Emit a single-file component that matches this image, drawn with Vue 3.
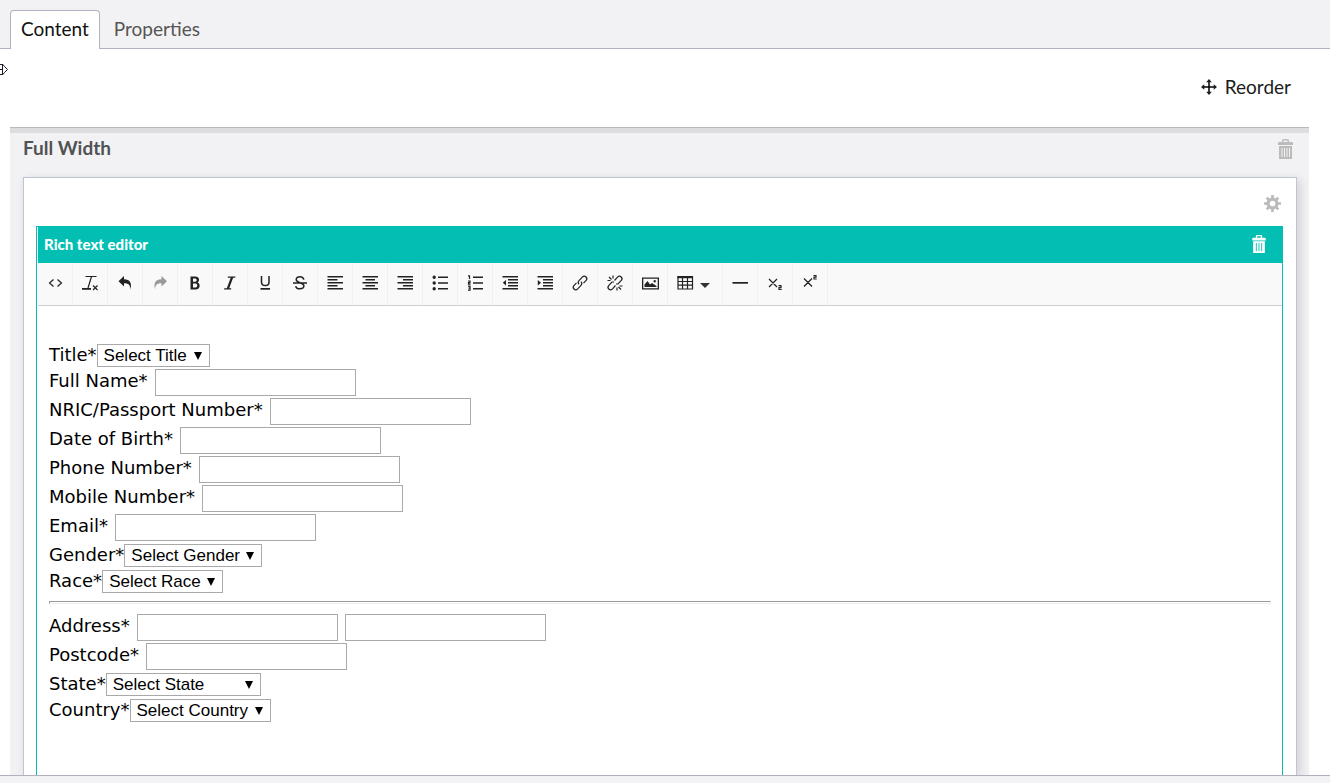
<script setup>
import { ref } from "vue";

const activeTab = ref("Content");
const tabs = ["Content", "Properties"];

// toolbar buttons, drawn on a 16x16 grid
const tools = [
  { title: "Source code", fill: "", line: "M6.500 4.500 2.500 8l4 3.500M10.500 4.500l4 3.500-4 3.500", thin: true },
  { title: "Clear formatting", fill: "M0 13h9v1.800H0z", line: "M3.500 1.500h11M9.500 1.500 6 13M11 10.500l4.500 4.500M15.500 10.500l-4.500 4.500", thin: true },
  { title: "Undo", fill: "M7 1v3.200c5.500-.2 8.500 3.800 6.300 10.300.2-4.300-1.700-6.300-6.300-6.200V11.500L1.500 6.200z", line: "" },
  { title: "Redo", fill: "M9.500 1v3.200c-5.500-.2-8.500 3.800-6.300 10.300-.2-4.300 1.700-6.300 6.300-6.200V11.500L15 6.200z", line: "", disabled: true },
  { title: "Bold", fill: "M3.500 1.500h5c3.800 0 4.600 4.300 2.200 6C14 9.200 13 14.500 8.700 14.500H3.500zM6 3.500v3.200h2.300c1.800 0 1.800-3.200 0-3.200zm0 5v4h2.600c2.200 0 2.200-4 0-4z", line: "" },
  { title: "Italic", fill: "M6 1.500h7.500l-.3 1.200h-2.100L7.200 13.300h2.100l-.3 1.200H2l.3-1.200h2.500L8.700 2.700H5.700z", line: "" },
  { title: "Underline", fill: "M3.500 13h9.500v1.700H3.500z", line: "M4.500 1v6c0 4.800 7.500 4.800 7.500 0V1" },
  { title: "Strikethrough", fill: "", line: "M1 8h14M11.800 4.600C11.300.9 4.200.8 4.200 4.600c0 3.700 7.700 2.500 7.700 6.200 0 4-7.700 4-8.100.3" },
  { title: "Align left", fill: "M.5 1h15.500v1.600H.5zM.5 4h10v1.600H.5zM.5 7h15.500v1.600H.5zM.5 10h10v1.600H.5zM.5 13h15.500v1.600H.5z", line: "" },
  { title: "Align center", fill: "M.5 1h15.500v1.600H.5zM3.500 4h9.500v1.600H3.500zM.5 7h15.500v1.600H.5zM3.500 10h9.500v1.600H3.500zM.5 13h15.500v1.600H.5z", line: "" },
  { title: "Align right", fill: "M.5 1h15.500v1.600H.5zM6 4h10v1.600H6zM.5 7h15.500v1.600H.5zM6 10h10v1.600H6zM.5 13h15.500v1.600H.5z", line: "" },
  { title: "Bullet list", fill: "M6 1.500h10v1.600H6zM6 7.200h10v1.600H6zM6 13h10v1.600H6zM.5 2.200a1.700 1.700 0 1 0 3.400 0 1.700 1.700 0 1 0-3.400 0zM.5 8a1.700 1.700 0 1 0 3.400 0 1.700 1.700 0 1 0-3.400 0zM.5 13.700a1.700 1.700 0 1 0 3.400 0 1.700 1.700 0 1 0-3.400 0z", line: "" },
  { title: "Numbered list", fill: "M6 1.500h10v1.600H6zM6 7.200h10v1.600H6zM6 13h10v1.600H6z", line: "M1 .8h1.500V4M1 6h2v1.600H1.500v1.600H3.500M1 11.200h2v4H1M1.500 13.200H3", thin: true },
  { title: "Decrease indent", fill: "M.5 1h15.500v1.600H.5zM6 4h10v1.600H6zM6 7h10v1.600H6zM6 10h10v1.600H6zM.5 13h15.500v1.600H.5zM4 5v5.600L.8 7.800z", line: "" },
  { title: "Increase indent", fill: "M.5 1h15.500v1.600H.5zM6 4h10v1.600H6zM6 7h10v1.600H6zM6 10h10v1.600H6zM.5 13h15.500v1.600H.5zM.8 5v5.600L4 7.800z", line: "" },
  { title: "Insert link", fill: "", line: "M7 9.300C5.800 8 6 6.700 7 5.700l3.300-3.600c2.600-2.500 6.100 1 3.600 3.600L11.500 8.200M9 6.700c1.200 1.300 1 2.600 0 3.600l-3.300 3.600c-2.600 2.500-6.100-1-3.600-3.600L4.500 7.800", thin: true },
  { title: "Remove link", fill: "", line: "M7.500 5.500l3-3.400c2.600-2.500 6.100 1 3.600 3.600L11 9 9 9M8.500 10.500l-3 3.400c-2.600 2.500-6.100-1-3.600-3.600L5 7 7 7M2 2l2.500 2.500M6 .5v3M.5 5.500h3M14 14.500l-2.500-2.500M10 15.500v-3M15.500 11h-3", thin: true },
  { title: "Insert image", fill: "M0 2.500h17v12H0zM1.300 3.800v9.400h14.400V3.800zM2.500 12V9.500L5.500 6 8 9.500l2-1.500 4.500 3v1zM11.500 6.200a1.200 1.200 0 1 0 2.400 0 1.200 1.200 0 1 0-2.400 0z", line: "" },
  { title: "Table", fill: "M.5 1h15.500v2.200H.5z", line: "M1 1.500h14.500v12.500H1zM1 6.500h14.500M1 10.200h14.500M5.500 3v11M10.500 3v11", thin: true, menu: true },
  { title: "Horizontal line", fill: "M.5 7h15.500v1.700H.5z", line: "" },
  { title: "Subscript", fill: "", line: "M2 4l8 8M10 4l-8 8M11.500 10.500h2.500v1.800h-2v2h2.700", thin: true },
  { title: "Superscript", fill: "", line: "M2 3.500l8 8M10 3.500l-8 8M11.500 .5h2.500v1.700h-2v1.800h2.700", thin: true },
];

const personal = [
  { id: "title", label: "Title*", options: ["Select Title"] },
  { id: "fullname", label: "Full Name*" },
  { id: "nric", label: "NRIC/Passport Number*" },
  { id: "dob", label: "Date of Birth*" },
  { id: "phone", label: "Phone Number*" },
  { id: "mobile", label: "Mobile Number*" },
  { id: "email", label: "Email*" },
  { id: "gender", label: "Gender*", options: ["Select Gender"] },
  { id: "race", label: "Race*", options: ["Select Race"] },
];

const address = [
  { id: "address", label: "Address*", second: true },
  { id: "postcode", label: "Postcode*" },
  { id: "state", label: "State*", options: ["Select State", "Negeri Sembilan"] },
  { id: "country", label: "Country*", options: ["Select Country"] },
];

const groups = [personal, address];
</script>

<template>
  <div class="page">
    <!-- tabs -->
    <nav class="tabs">
      <a
        v-for="tab in tabs"
        :key="tab"
        href="#"
        class="tab"
        :class="{ active: tab === activeTab }"
        @click.prevent="activeTab = tab"
        >{{ tab }}</a
      >
    </nav>

    <main class="content">
      <svg class="handle" width="8" height="13" viewBox="0 0 8 13">
        <path d="M0 1.500h3l1.500 2 3 3-3 3-1.500 2H0M0 6.500h2M2.500 2v9" fill="none" stroke="#1b1b2b" />
      </svg>

      <div class="actions">
        <button class="reorder" type="button">
          <svg width="16" height="16" viewBox="0 0 16 16">
            <path d="M8 1v14M1 8h14" stroke="#000" stroke-width="1.500" />
            <path d="M8 0l2.800 3.300H5.200zM8 16l2.800-3.300H5.200zM0 8l3.300-2.800v5.600zM16 8l-3.300-2.800v5.600z" />
          </svg>
          Reorder
        </button>
      </div>

      <!-- grid row -->
      <section class="row">
        <header class="row-header">
          <h2>Full Width</h2>
          <button class="icon-button" type="button" aria-label="Delete row">
            <svg width="15" height="20" viewBox="0 0 15 20">
              <path d="M4 3V1.500Q4 0 5.500 0h4Q11 0 11 1.500V3h3q1 0 1 1v2H0V4q0-1 1-1zM5.500 3h4V1.500h-4zM1 7h13v13H1zM3.500 9v9h1V9zM6 9v9h1V9zM8.500 9v9h1V9zM11 9v9h1V9z" fill-rule="evenodd" />
            </svg>
          </button>
        </header>

        <div class="cell">
          <div class="cell-tools">
            <button class="icon-button" type="button" aria-label="Settings">
              <svg width="17" height="17" viewBox="0 0 16 16">
                <circle cx="8" cy="8" r="4.200" fill="none" stroke="currentColor" stroke-width="3" />
                <path d="M8 0v3M8 13v3M0 8h3M13 8h3M2.500 2.500l2 2M11.500 11.500l2 2M2.500 13.500l2-2M11.500 4.500l2-2" stroke="currentColor" stroke-width="2.500" />
              </svg>
            </button>
          </div>

          <div class="editor">
            <header class="editor-header">
              <h3>Rich text editor</h3>
              <button class="icon-button light" type="button" aria-label="Delete editor">
                <svg width="14" height="18" viewBox="0 0 15 20">
                  <path d="M4 3V1.500Q4 0 5.500 0h4Q11 0 11 1.500V3h3q1 0 1 1v2H0V4q0-1 1-1zM5.500 3h4V1.500h-4zM1 7h13v13H1zM4 9v9h1V9zM7 9v9h1V9zM10 9v9h1V9z" fill-rule="evenodd" />
                </svg>
              </button>
            </header>

            <div class="toolbar">
              <button
                v-for="tool in tools"
                :key="tool.title"
                class="tool"
                :class="{ menu: tool.menu }"
                type="button"
                :aria-label="tool.title"
                :disabled="tool.disabled"
              >
                <svg class="tool-icon" width="16" height="16" viewBox="0 0 16 16">
                  <path v-if="tool.fill" :d="tool.fill" fill-rule="evenodd" />
                  <path v-if="tool.line" :d="tool.line" fill="none" stroke="currentColor" :stroke-width="tool.thin ? 1.2 : 1.5" />
                </svg>
                <span v-if="tool.menu" class="caret"></span>
              </button>
            </div>

            <form class="form" @submit.prevent>
              <template v-for="(group, index) in groups" :key="index">
                <hr v-if="index > 0" />
                <div
                  v-for="field in group"
                  :key="field.id"
                  class="field"
                  :class="{ choice: field.options }"
                >
                  <label :for="field.id">{{ field.label }}</label>
                  <select v-if="field.options" :id="field.id">
                    <option v-for="option in field.options" :key="option">{{ option }}</option>
                  </select>
                  <input v-else :id="field.id" type="text" />
                  <input v-if="field.second" type="text" aria-label="Address line 2" />
                </div>
              </template>
            </form>
          </div>
        </div>
      </section>
    </main>

    <footer class="bottom-bar"></footer>
  </div>
</template>

<style>
body {
  margin: 0;
}
</style>

<style scoped>
* {
  box-sizing: border-box;
}
.page {
  display: flex;
  flex-direction: column;
  height: 100vh;
  font-family: Lato, "Liberation Sans", sans-serif;
  font-size: 19px;
  color: #1b1b1b;
  background: #fff;
}
button {
  border: 0;
  padding: 0;
  background: none;
  font: inherit;
  color: inherit;
  cursor: pointer;
}
svg {
  display: block;
  fill: currentColor;
}

/* tabs */
.tabs {
  flex: none;
  display: flex;
  align-items: flex-end;
  gap: 3px;
  height: 49px;
  padding-left: 10px;
  background: #f2f2f4;
  border-bottom: 1px solid #b3b0c4;
}
.tab {
  height: 38px;
  padding: 0 10px;
  border: 1px solid transparent;
  border-bottom: 0;
  line-height: 36px;
  color: #555;
  text-decoration: none;
}
.tab.active {
  height: 39px;
  margin-bottom: -1px;
  border-color: #b3b0c4;
  border-radius: 4px 4px 0 0;
  background: #fff;
  color: #111;
}

/* content */
.content {
  position: relative;
  flex: 1;
  min-height: 0;
  display: flex;
  flex-direction: column;
  padding: 0 21px 0 10px;
  overflow: hidden;
}
.handle {
  position: absolute;
  top: 14px;
  left: 0;
}
.actions {
  flex: none;
  display: flex;
  justify-content: flex-end;
  height: 78px;
  padding: 26px 18px 0 0;
}
.reorder {
  display: flex;
  align-items: center;
  gap: 8px;
  height: 24px;
  line-height: 22px;
}

/* grid row */
.row {
  flex: 1;
  display: flex;
  flex-direction: column;
  padding: 0 12px 0 13px;
  border-top: 1px solid #b9bbbb;
  background: linear-gradient(#dddddf 5px, #f2f2f4 5px);
}
.row-header {
  flex: none;
  display: flex;
  justify-content: space-between;
  height: 49px;
  padding: 10px 4px 0 0;
}
.row-header h2 {
  margin: 0;
  font-size: 19px;
  line-height: 20px;
  font-weight: 700;
  color: #515254;
}
.icon-button {
  display: flex;
  color: #bbb;
}
.row-header .icon-button {
  padding-top: 1px;
}
.icon-button.light {
  color: #fff;
}
.cell {
  flex: 1;
  display: flex;
  flex-direction: column;
  padding: 0 13px 0 12px;
  border: 1px solid #bcc6d2;
  border-bottom: 0;
  background: #fff;
  box-shadow: 3px 3px 10px rgba(0, 0, 0, 0.14);
}
.cell-tools {
  flex: none;
  display: flex;
  justify-content: flex-end;
  height: 48px;
  padding: 17px 2px 0 0;
}

/* editor */
.editor {
  flex: 1;
  border: 1px solid #03bfb3;
  border-bottom: 0;
}
.editor-header {
  display: flex;
  align-items: center;
  justify-content: space-between;
  height: 36px;
  margin-left: 1px;
  padding: 0 16px 2px 6px;
  background: #03bfb3;
  color: #fff;
}
.editor-header h3 {
  margin: 0;
  font-size: 15px;
  font-weight: 900;
}
.toolbar {
  display: flex;
  height: 43px;
  margin-left: 1px;
  background: #f9f9f9;
  border-bottom: 1px solid #d0d0d0;
}
.tool {
  display: flex;
  align-items: center;
  width: 35px;
  padding: 0 0 2px 9px;
  border-right: 1px solid #f1f1f1;
  color: #222;
}
.tool:disabled {
  color: #9a9a9a;
}
.tool.menu {
  gap: 7px;
  width: 55px;
}
.tool-icon {
  overflow: visible;
}
.caret {
  margin-top: 4px;
  border: 5px solid transparent;
  border-top-color: #333;
  border-bottom: 0;
}

/* form */
.form {
  padding: 37px 11px 0 12px;
  font-family: "DejaVu Sans", sans-serif;
  font-size: 18px;
  color: #000;
}
.field {
  display: flex;
  align-items: flex-start;
  height: 29px;
  line-height: 24px;
}
.field.choice {
  height: 26px;
}
.field input {
  width: 201px;
  height: 27px;
  margin-left: 7px;
  border: 1px solid #a9a9a9;
  background: #fff;
}
.field select {
  appearance: none;
  height: 23px;
  margin-top: 1px;
  padding: 0 21px 0 6px;
  border: 1px solid #a9a9a9;
  border-radius: 0;
  background: #fff
    url("data:image/svg+xml,%3Csvg xmlns='http://www.w3.org/2000/svg' width='8' height='8'%3E%3Cpath d='M0 0h8L4 8z'/%3E%3C/svg%3E")
    no-repeat right 7px center;
  font-family: "Liberation Sans", Arial, sans-serif;
  font-size: 17px;
  line-height: 20px;
  color: #000;
}
hr {
  margin: 6px 0 10px;
  height: 3px;
  border: 1px solid;
  border-color: #9a9a9a #eee #eee #9a9a9a;
}

.bottom-bar {
  flex: none;
  height: 8px;
  border-top: 1px solid #b3b0bc;
  background: #f2f2f4;
}
</style>
